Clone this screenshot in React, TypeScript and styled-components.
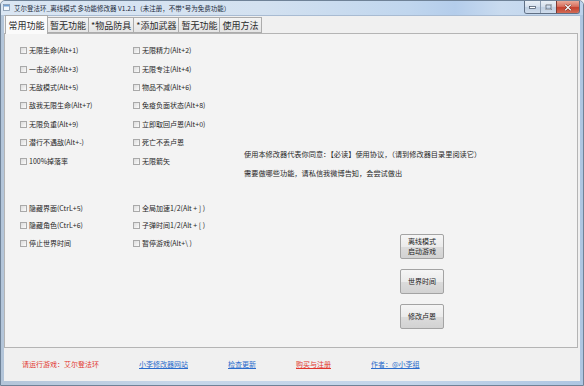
import React from 'react'
import styled, { createGlobalStyle } from 'styled-components'

const GlobalStyle = createGlobalStyle`
  html, body {
    margin: 0;
    padding: 0;
    background: #f0f0f0;
  }
  body {
    width: 584px;
    height: 386px;
    overflow: hidden;
    font-family: "Noto Sans CJK SC", "Liberation Sans", sans-serif;
    color: #222;
  }
`

const Window = styled.div`
  width: 584px;
  height: 386px;
  box-sizing: border-box;
  display: flex;
  flex-direction: column;
  border: 1px solid #6f8297;
  border-radius: 5px 5px 0 0;
  background: linear-gradient(to right, #b3c5d9, #c6d6e9 30%, #c3d5ea 70%, #aec6e2);
`

const TitleBar = styled.div`
  height: 14px;
  display: flex;
  align-items: flex-start;
  background: linear-gradient(to right, #dae6f3 0%, #d3e1f0 45%, #c0d6ee 70%, #b4cdeb 78%, #c9dbef 86%, #bcd2ec 100%);
  border-radius: 4px 4px 0 0;
`

const TitleIcon = styled.svg`
  width: 7px;
  height: 7px;
  margin: 3px 4px 0 2px;
  flex-shrink: 0;
`

const TitleText = styled.div`
  font-size: 6.5px;
  line-height: 12px;
  color: #1c2a3a;
  white-space: nowrap;
  margin-top: 1px;
`

const CaptionGroup = styled.div`
  margin-left: auto;
  margin-right: 3px;
  display: flex;
  height: 12px;
  border: 1px solid #5f6f84;
  border-top: none;
  border-radius: 0 0 3px 3px;
  overflow: hidden;
`

const CaptionButton = styled.div<{ $close?: boolean }>`
  width: ${({ $close }) => ($close ? 22 : 15)}px;
  display: flex;
  align-items: center;
  justify-content: center;
  border-left: ${({ $close }) => ($close ? '1px solid #7a3a33' : '1px solid #8a9bb0')};
  background: ${({ $close }) =>
    $close
      ? 'linear-gradient(#e9a999 0%, #d8705f 45%, #c4402e 55%, #d26b55 100%)'
      : 'linear-gradient(#e9eff6 0%, #d6e1ee 45%, #bfcfe2 55%, #cfdcec 100%)'};
  &:first-child {
    border-left: none;
  }
`

const Client = styled.div`
  flex: 1;
  display: flex;
  flex-direction: column;
  margin: 0 3px 4px 3px;
  background: #f0f0f0;
  border-top: 1px solid #a8bbd2;
  min-height: 0;
`

const TabStrip = styled.div`
  height: 17px;
  display: flex;
  align-items: flex-end;
  padding-left: 1px;
  position: relative;
  z-index: 1;
`

const Tab = styled.div<{ $active?: boolean }>`
  box-sizing: border-box;
  height: ${({ $active }) => ($active ? 19 : 16)}px;
  margin-bottom: ${({ $active }) => ($active ? -1 : 0)}px;
  margin-left: ${({ $active }) => ($active ? 0 : -1)}px;
  padding: 0 ${({ $active }) => ($active ? 2.5 : 2)}px;
  border: 1px solid #acacac;
  border-bottom: ${({ $active }) => ($active ? 'none' : '1px solid #acacac')};
  background: ${({ $active }) => ($active ? '#fbfbfb' : 'linear-gradient(#f4f4f4, #e4e4e4)')};
  font-size: 9px;
  line-height: 1;
  color: #2a2a2a;
  display: flex;
  align-items: center;
  white-space: nowrap;
  &:first-child {
    margin-left: 0;
  }
`

const Panel = styled.div`
  flex: 1;
  display: flex;
  margin-right: 2px;
  border: 1px solid #b4b4b4;
  background: #f3f3f3;
  padding: 7.5px 0 0 15px;
`

const LeftArea = styled.div`
  width: 224px;
  display: flex;
  flex-direction: column;
`

const CheckGrid = styled.div<{ $gap?: number }>`
  display: grid;
  grid-template-columns: 113px 111px;
  grid-auto-rows: ${({ $gap }) => ($gap ? 17.8 : 18.4)}px;
  margin-top: ${({ $gap }) => $gap ?? 0}px;
`

const CheckRow = styled.label`
  display: flex;
  align-items: center;
  gap: 2px;
  font-size: 7px;
  line-height: 1;
  white-space: nowrap;
  color: #262626;
`

const Box = styled.input`
  appearance: none;
  margin: 0;
  width: 7px;
  height: 7px;
  box-sizing: border-box;
  border: 1px solid #a9a9a9;
  background: linear-gradient(135deg, #dcdcdc, #fbfbfb);
  flex-shrink: 0;
`

const RightArea = styled.div`
  display: flex;
  flex-direction: column;
`

const InfoLine = styled.div`
  font-size: 7.2px;
  line-height: 19.3px;
  color: #262626;
  white-space: nowrap;
`

const InfoBlock = styled.div`
  margin-top: 103.5px;
`

const ButtonStack = styled.div`
  margin: 50px 0 0 156px;
  display: flex;
  flex-direction: column;
  gap: 10px;
`

const ActionButton = styled.button`
  width: 44px;
  height: 25px;
  box-sizing: border-box;
  padding: 0;
  border: 1px solid #a3a3a3;
  border-radius: 2px;
  background: linear-gradient(#f5f5f5 0%, #ebebeb 50%, #dcdcdc 51%, #d2d2d2 100%);
  font-family: inherit;
  font-size: 7px;
  line-height: 10px;
  color: #222;
`

const Footer = styled.div`
  height: 33px;
  display: flex;
  align-items: center;
  gap: 40px;
  padding-left: 18px;
  font-size: 7px;
  line-height: 1;
  white-space: nowrap;
`

const FooterItem = styled.span<{ $red?: boolean; $link?: boolean }>`
  color: ${({ $red }) => ($red ? '#e2362e' : '#2a6ccc')};
  text-decoration: ${({ $link }) => ($link ? 'underline' : 'none')};
`

const leftGroup = [
  '无限生命(Alt+1)',
  '无限精力(Alt+2)',
  '一击必杀(Alt+3)',
  '无限专注(Alt+4)',
  '无敌模式(Alt+5)',
  '物品不减(Alt+6)',
  '敌我无限生命(Alt+7)',
  '免疫负面状态(Alt+8)',
  '无限负重(Alt+9)',
  '立即取回卢恩(Alt+0)',
  '潜行不遇敌(Alt+-)',
  '死亡不丢卢恩',
  '100%掉落率',
  '无限箭矢',
]

const lowerGroup = [
  '隐藏界面(CtrL+5)',
  '全局加速1/2(Alt + ] )',
  '隐藏角色(CtrL+6)',
  '子弹时间1/2(Alt + [ )',
  '停止世界时间',
  '暂停游戏(Alt+\\ )',
]

const tabs = ['常用功能', '暂无功能', '*物品防具', '*添加武器', '暂无功能', '使用方法']

function Check({ text }: { text: string }) {
  return (
    <CheckRow>
      <Box type="checkbox" />
      {text}
    </CheckRow>
  )
}

export default function App() {
  return (
    <>
      <GlobalStyle />
      <Window>
        <TitleBar>
          <TitleIcon viewBox="0 0 7 7">
            <rect x="0.5" y="0.5" width="6" height="6" fill="#f4f8fc" stroke="#7f93aa" strokeWidth="0.8" />
            <rect x="0.9" y="0.9" width="5.2" height="1.6" fill="#6f9fd4" />
          </TitleIcon>
          <TitleText>艾尔登法环_离线模式 多功能修改器  V1.2.1（未注册，不带*号为免费功能）</TitleText>
          <CaptionGroup>
            <CaptionButton>
              <svg width="7" height="3" viewBox="0 0 7 3">
                <rect x="0.5" y="0.5" width="6" height="2" fill="#fff" stroke="#3b4a5e" strokeWidth="0.7" />
              </svg>
            </CaptionButton>
            <CaptionButton>
              <svg width="7" height="6" viewBox="0 0 7 6">
                <rect x="0.7" y="0.7" width="5.6" height="4.6" fill="none" stroke="#3b4a5e" strokeWidth="1.2" />
                <rect x="0.7" y="0.7" width="5.6" height="4.6" fill="none" stroke="#fff" strokeWidth="0.5" />
              </svg>
            </CaptionButton>
            <CaptionButton $close>
              <svg width="8" height="7" viewBox="0 0 8 7">
                <path d="M1.2 0.8 L6.8 6.2 M6.8 0.8 L1.2 6.2" stroke="#5a1f18" strokeWidth="2.2" />
                <path d="M1.2 0.8 L6.8 6.2 M6.8 0.8 L1.2 6.2" stroke="#fff" strokeWidth="1.2" />
              </svg>
            </CaptionButton>
          </CaptionGroup>
        </TitleBar>
        <Client>
          <TabStrip>
            {tabs.map((t, i) => (
              <Tab key={i} $active={i === 0}>
                {t}
              </Tab>
            ))}
          </TabStrip>
          <Panel>
            <LeftArea>
              <CheckGrid>
                {leftGroup.map((t) => (
                  <Check key={t} text={t} />
                ))}
              </CheckGrid>
              <CheckGrid $gap={29}>
                {lowerGroup.map((t) => (
                  <Check key={t} text={t} />
                ))}
              </CheckGrid>
            </LeftArea>
            <RightArea>
              <InfoBlock>
                <InfoLine>使用本修改器代表你同意：【必读】使用协议，（请到修改器目录里阅读它）</InfoLine>
                <InfoLine>需要做哪些功能，请私信我微博告知，会尝试做出</InfoLine>
              </InfoBlock>
              <ButtonStack>
                <ActionButton>
                  离线模式
                  <br />
                  启动游戏
                </ActionButton>
                <ActionButton>世界时间</ActionButton>
                <ActionButton>修改卢恩</ActionButton>
              </ButtonStack>
            </RightArea>
          </Panel>
          <Footer>
            <FooterItem $red>请运行游戏：艾尔登法环</FooterItem>
            <FooterItem $link>小李修改器网站</FooterItem>
            <FooterItem $link>检查更新</FooterItem>
            <FooterItem $red $link>购买与注册</FooterItem>
            <FooterItem $link>作者：@小李组</FooterItem>
          </Footer>
        </Client>
      </Window>
    </>
  )
}
